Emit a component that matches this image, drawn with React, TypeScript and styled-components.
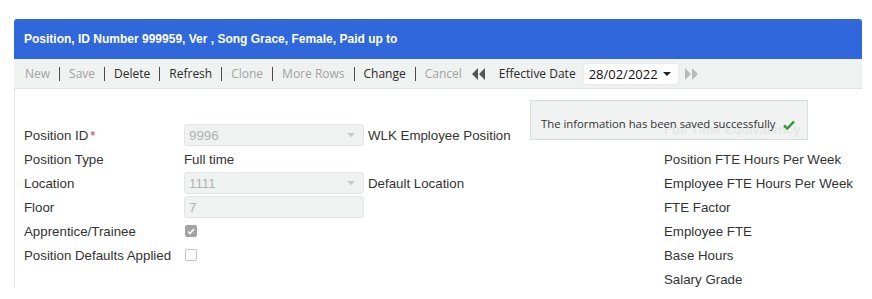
import React from "react";
import styled, { createGlobalStyle } from "styled-components";

const GlobalStyle = createGlobalStyle`
  body {
    margin: 0;
    background: #fff;
    font-family: "Liberation Sans", Arial, sans-serif;
  }
`;

const Page = styled.div`
  padding: 19px 10px 0 14px;
`;

const Panel = styled.div`
  position: relative;
`;

const Header = styled.div`
  height: 40px;
  display: flex;
  align-items: center;
  padding-left: 10px;
  background: #3068db;
  border-radius: 3px 3px 0 0;
  color: #fff;
  font-weight: bold;
  font-size: 12px;
`;

const Toolbar = styled.div`
  height: 29px;
  display: flex;
  align-items: center;
  padding-left: 11px;
  background: #f0f1f1;
  border-bottom: 1px solid #e2e3e3;
  font-family: "Open Sans", sans-serif;
  font-size: 12px;
`;

const ToolItem = styled.span<{ $disabled?: boolean; $gap?: number }>`
  color: ${(p) => (p.$disabled ? "#a3a3a3" : "#2b2b2b")};
  margin-left: ${(p) => p.$gap ?? 0}px;
  white-space: nowrap;
`;

const Sep = styled.span`
  width: 1px;
  height: 14px;
  margin: 0 9px;
  background: #4a4a4a;
`;

const NavIcon = styled.svg<{ $muted?: boolean }>`
  width: 14px;
  height: 12px;
  margin-left: ${(p) => (p.$muted ? "0" : "10px")};
  fill: ${(p) => (p.$muted ? "#b9b9b9" : "#555")};
  flex: none;
`;

const DateBox = styled.div`
  width: 86px;
  height: 20px;
  margin: 0 5px 0 7px;
  padding: 0 3px 0 5px;
  display: flex;
  align-items: center;
  justify-content: space-between;
  background: #fff;
  border: 1px solid #ebebeb;
  border-radius: 3px;
  color: #111;
  font-size: 13px;
`;

const Caret = styled.span<{ $light?: boolean }>`
  width: 0;
  height: 0;
  border-left: 4px solid transparent;
  border-right: 4px solid transparent;
  border-top: 4px solid ${(p) => (p.$light ? "#c6c6c6" : "#222")};
  margin-right: ${(p) => (p.$light ? "8px" : "4px")};
`;

const Body = styled.div`
  height: 198px;
  display: flex;
  padding: 34px 0 0 9px;
  border-left: 1px solid #e5e5e5;
  box-sizing: border-box;
  font-size: 13.3px;
  color: #333;
`;

const LeftSection = styled.div`
  width: 640px;
  display: grid;
  grid-template-columns: 160px 180px auto;
  grid-auto-rows: 24px;
  align-items: center;
  align-content: start;
`;

const Label = styled.div`
  white-space: nowrap;
`;

const Required = styled.span`
  color: #e0322b;
  margin-left: 2px;
`;

const Field = styled.div`
  height: 20px;
  display: flex;
  align-items: center;
  justify-content: space-between;
  padding-left: 4px;
  background: #f0f1f1;
  border: 1px solid #e4e5e5;
  border-radius: 3px;
  color: #b2b2b2;
`;

const Note = styled.div<{ $flush?: boolean }>`
  padding-left: ${(p) => (p.$flush ? "0" : "4px")};
  white-space: nowrap;
`;

const Check = styled.span<{ $checked?: boolean }>`
  width: 12px;
  height: 12px;
  margin-left: 1px;
  box-sizing: border-box;
  border-radius: 2px;
  display: flex;
  align-items: center;
  justify-content: center;
  background: ${(p) => (p.$checked ? "#a3a3a3" : "#fff")};
  border: 1px solid ${(p) => (p.$checked ? "#a3a3a3" : "#c2c2c2")};
`;

const RightSection = styled.div`
  display: flex;
  flex-direction: column;
  margin-top: -5px;
`;

const GroupTitle = styled.div`
  height: 24px;
  margin-bottom: 6px;
  line-height: 24px;
  font-weight: bold;
  font-size: 13px;
  color: #a8a8a8;
`;

const RightRow = styled.div`
  height: 24px;
  line-height: 24px;
  white-space: nowrap;
`;

const Toast = styled.div`
  position: absolute;
  left: 516px;
  top: 81px;
  width: 278px;
  height: 40px;
  box-sizing: border-box;
  padding: 15px 0 0 10px;
  display: flex;
  align-items: flex-start;
  gap: 7px;
  white-space: nowrap;
  background: rgba(239, 240, 240, 0.86);
  border: 1px solid #dcdddd;
  font-family: "Open Sans", sans-serif;
  font-size: 11.3px;
  color: #333;
`;

const toolItems: { label: string; disabled?: boolean }[] = [
  { label: "New", disabled: true },
  { label: "Save", disabled: true },
  { label: "Delete" },
  { label: "Refresh" },
  { label: "Clone", disabled: true },
  { label: "More Rows", disabled: true },
  { label: "Change" },
  { label: "Cancel", disabled: true },
];

const fteRows = [
  "Position FTE Hours Per Week",
  "Employee FTE Hours Per Week",
  "FTE Factor",
  "Employee FTE",
  "Base Hours",
  "Salary Grade",
];

const DoubleArrow = ({ dir, muted }: { dir: "left" | "right"; muted?: boolean }) => (
  <NavIcon viewBox="0 0 14 12" $muted={muted}>
    {dir === "left" ? (
      <path d="M0 6 L6 0 L6 12 Z M7 6 L13 0 L13 12 Z" />
    ) : (
      <path d="M1 0 L7 6 L1 12 Z M8 0 L14 6 L8 12 Z" />
    )}
  </NavIcon>
);

const App = () => {
  return (
    <Page>
      <GlobalStyle />
      <Panel>
        <Header>Position, ID Number 999959, Ver , Song Grace, Female, Paid up to</Header>
        <Toolbar>
          {toolItems.map((item, i) => (
            <React.Fragment key={item.label}>
              {i > 0 && <Sep />}
              <ToolItem $disabled={item.disabled}>{item.label}</ToolItem>
            </React.Fragment>
          ))}
          <DoubleArrow dir="left" />
          <ToolItem $gap={13}>Effective Date</ToolItem>
          <DateBox>
            28/02/2022
            <Caret />
          </DateBox>
          <DoubleArrow dir="right" muted />
        </Toolbar>
        <Body>
          <LeftSection>
            <Label>
              Position ID<Required>*</Required>
            </Label>
            <Field>
              9996
              <Caret $light />
            </Field>
            <Note>WLK Employee Position</Note>

            <Label>Position Type</Label>
            <Note $flush>Full time</Note>
            <span />

            <Label>Location</Label>
            <Field>
              1111
              <Caret $light />
            </Field>
            <Note>Default Location</Note>

            <Label>Floor</Label>
            <Field>7</Field>
            <span />

            <Label>Apprentice/Trainee</Label>
            <Check $checked>
              <svg width="8" height="7" viewBox="0 0 8 7">
                <path d="M1 3.5 L3 5.5 L7 1" stroke="#fff" strokeWidth="1.6" fill="none" />
              </svg>
            </Check>
            <span />

            <Label>Position Defaults Applied</Label>
            <Check />
            <span />
          </LeftSection>
          <RightSection>
            <GroupTitle>Full Time Equivalency</GroupTitle>
            {fteRows.map((r) => (
              <RightRow key={r}>{r}</RightRow>
            ))}
          </RightSection>
        </Body>
        <Toast>
          The information has been saved successfully
          <svg width="12" height="10" viewBox="0 0 12 10" style={{ marginTop: 4 }}>
            <path d="M1 5.5 L4.3 8.5 L11 1.5" stroke="#2f9a2c" strokeWidth="2.4" fill="none" />
          </svg>
        </Toast>
      </Panel>
    </Page>
  );
};

export default App;
